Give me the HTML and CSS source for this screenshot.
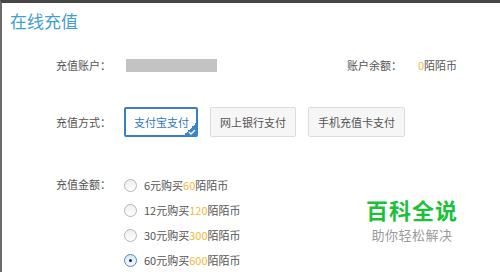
FILE: index.html
```html
<!DOCTYPE html>
<html lang="zh-CN">
<head>
  <meta charset="UTF-8">
  <title>在线充值</title>
  <link rel="stylesheet" href="styles.css">
</head>
<body>
  <div class="page">
    <h1 class="title">在线充值</h1>

    <div class="row row-account">
      <span class="label">充值账户：</span>
      <span class="account-mask"></span>
      <span class="balance">
        <span class="balance-label">账户余额：</span>
        <span><em class="num">0</em>陌陌币</span>
      </span>
    </div>

    <div class="row row-pay">
      <span class="label">充值方式：</span>
      <div class="pay-list">
        <button class="pay active">支付宝支付
          <span class="corner">
            <svg width="8" height="6" viewBox="0 0 8 6"><path d="M1 3 L3 5 L7 1" fill="none" stroke="#fff" stroke-width="1.3"/></svg>
          </span>
        </button>
        <button class="pay">网上银行支付</button>
        <button class="pay">手机充值卡支付</button>
      </div>
    </div>

    <div class="row row-amount">
      <span class="label">充值金额：</span>
      <ul class="amounts">
        <li><span class="radio"></span>6元购买<em class="num">60</em>陌陌币</li>
        <li><span class="radio"></span>12元购买<em class="num">120</em>陌陌币</li>
        <li><span class="radio"></span>30元购买<em class="num">300</em>陌陌币</li>
        <li><span class="radio checked"></span>60元购买<em class="num">600</em>陌陌币</li>
      </ul>
    </div>

    <div class="watermark">
      <div class="wm-big">百科全说</div>
      <div class="wm-small">助你轻松解决</div>
    </div>
  </div>
</body>
</html>
```

FILE: styles.css
```css
html, body {
  margin: 0;
  padding: 0;
  background: #ffffff;
}
body {
  font-family: "Noto Sans CJK SC", "Liberation Sans", sans-serif;
  color: #555555;
  font-size: 11px;
}
.page {
  position: relative;
  height: 269px;
  border-top: 3px solid #464646;
  border-left: 2px solid #6b6b6b;
  overflow: hidden;
}
.title {
  margin: 0;
  padding: 6px 0 0 8px;
  height: 30px;
  font-size: 17px;
  font-weight: normal;
  color: #3fa0cf;
  line-height: 24px;
}
.row {
  display: flex;
  align-items: flex-start;
}
.label {
  width: 109px;
  text-align: right;
  color: #555555;
  flex-shrink: 0;
}
.row-account {
  margin-top: 19px;
  align-items: center;
  height: 14px;
}
.account-mask {
  display: inline-block;
  width: 91px;
  height: 13px;
  margin-left: 15px;
  background: #c3c3c3;
}
.balance {
  margin-left: auto;
  margin-right: 43px;
  display: flex;
  gap: 16px;
}
.num {
  font-style: normal;
  color: #f3b838;
}
.row-pay {
  margin-top: 35px;
  align-items: center;
}
.pay-list {
  display: flex;
  gap: 12px;
  margin-left: 13px;
}
.pay {
  position: relative;
  height: 30px;
  padding: 0 9px;
  white-space: nowrap;
  font-family: inherit;
  font-size: 11px;
  color: #555555;
  background: #f6f6f6;
  border: 1px solid #dcdcdc;
  border-radius: 2px;
}
.pay.active {
  width: 74px;
  padding: 0 0 0 1px;
  text-align: center;
  color: #2f78bf;
  background: #ffffff;
  border: 2px solid #3a7fbf;
}
.corner {
  position: absolute;
  right: -1px;
  bottom: -1px;
  width: 14px;
  height: 14px;
  background: linear-gradient(135deg, transparent 50%, #3a86cc 50%);
}
.corner svg {
  position: absolute;
  right: 1px;
  bottom: 1px;
}
.row-amount {
  margin-top: 39px;
}
.amounts {
  list-style: none;
  margin: 0 0 0 13px;
  padding: 0;
  display: flex;
  flex-direction: column;
  gap: 7px;
}
.amounts li {
  display: flex;
  align-items: center;
  height: 18px;
  color: #555555;
}
.radio {
  width: 11px;
  height: 11px;
  border: 1px solid #b5b5b5;
  border-radius: 50%;
  background: linear-gradient(#eeeeee, #ffffff);
  margin-right: 7px;
  position: relative;
}
.radio.checked {
  border-color: #4c86c2;
  background: linear-gradient(#d8e8f8, #f4f9ff);
}
.radio.checked::after {
  content: "";
  position: absolute;
  left: 4px;
  top: 4px;
  width: 3px;
  height: 3px;
  border-radius: 50%;
  background: #1e2a38;
}
.watermark {
  position: absolute;
  left: 364px;
  top: 195px;
  text-align: center;
}
.wm-big {
  font-size: 22px;
  font-weight: bold;
  color: #1cc13a;
  letter-spacing: 1px;
  line-height: 22px;
  margin-bottom: 7px;
}
.wm-small {
  font-size: 13px;
  color: #9a9a9a;
  line-height: 15px;
  letter-spacing: 0.5px;
}
```
